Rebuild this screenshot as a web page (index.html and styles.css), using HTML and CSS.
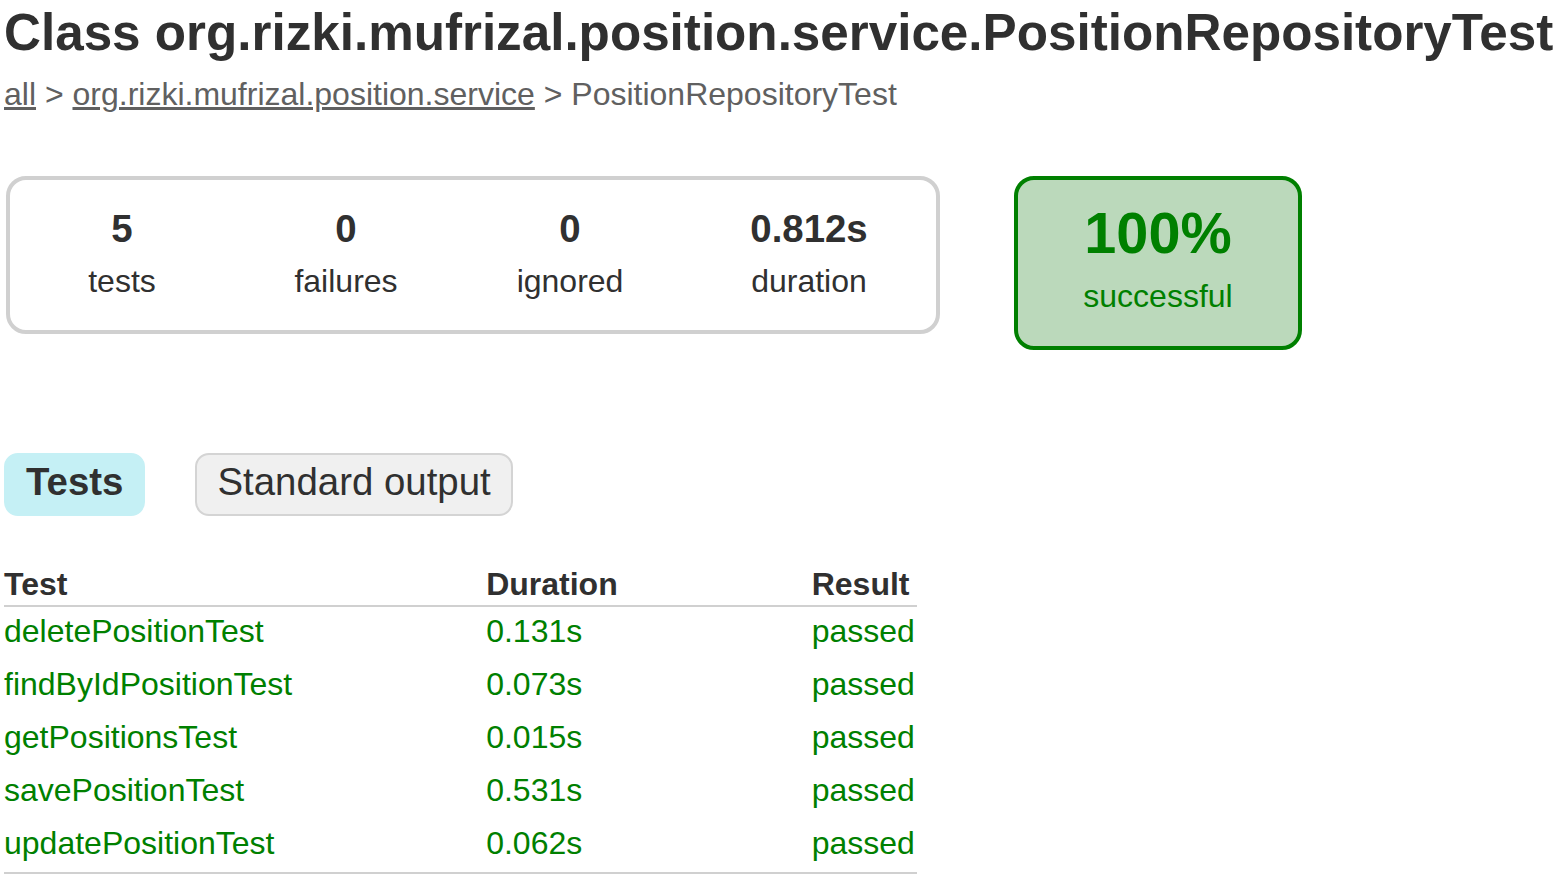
FILE: index.html
```html
<!DOCTYPE html>
<html>
<head>
<meta charset="utf-8">
<title>Test results - Class org.rizki.mufrizal.position.service.PositionRepositoryTest</title>
<link rel="stylesheet" href="styles.css">
</head>
<body>
<div class="content">
  <h1 class="title">Class org.rizki.mufrizal.position.service.PositionRepositoryTest</h1>
  <div class="breadcrumbs"><a href="#">all</a> &gt; <a href="#">org.rizki.mufrizal.position.service</a> &gt; PositionRepositoryTest</div>

  <div class="summary">
    <div class="summary-group">
      <div class="info-box">
        <div class="counter">5</div>
        <p>tests</p>
      </div>
      <div class="info-box">
        <div class="counter">0</div>
        <p>failures</p>
      </div>
      <div class="info-box">
        <div class="counter">0</div>
        <p>ignored</p>
      </div>
      <div class="info-box duration">
        <div class="counter">0.812s</div>
        <p>duration</p>
      </div>
    </div>
    <div class="success-rate">
      <div class="percent">100%</div>
      <p>successful</p>
    </div>
  </div>

  <ul class="tab-links">
    <li class="selected"><a href="#tab0">Tests</a></li>
    <li><a href="#tab1">Standard output</a></li>
  </ul>

  <div class="tab">
    <table class="results">
      <thead>
        <tr><th>Test</th><th>Duration</th><th>Result</th></tr>
      </thead>
      <tbody>
        <tr><td>deletePositionTest</td><td>0.131s</td><td>passed</td></tr>
        <tr><td>findByIdPositionTest</td><td>0.073s</td><td>passed</td></tr>
        <tr><td>getPositionsTest</td><td>0.015s</td><td>passed</td></tr>
        <tr><td>savePositionTest</td><td>0.531s</td><td>passed</td></tr>
        <tr><td>updatePositionTest</td><td>0.062s</td><td>passed</td></tr>
      </tbody>
    </table>
  </div>
</div>
</body>
</html>
```
FILE: styles.css
```css
html, body {
  margin: 0;
  padding: 0;
  background: #ffffff;
}

body {
  font-family: "Liberation Sans", Arial, Helvetica, sans-serif;
  font-size: 32px;
  color: #303030;
}

.content {
  padding: 7px 0 0 4px;
}

.title {
  font-size: 51.2px;
  font-weight: bold;
  line-height: 51px;
  margin: 0 0 20px 0;
  white-space: nowrap;
}

.breadcrumbs {
  line-height: 32px;
  color: #606060;
  white-space: nowrap;
}

.breadcrumbs a {
  color: #606060;
  text-decoration: underline;
}

/* summary */
.summary {
  display: flex;
  align-items: flex-start;
  margin-top: 64px;
  margin-bottom: 81px;
  padding: 2px;
}

.summary-group {
  display: flex;
  border: 4px solid #d0d0d0;
  border-radius: 20px;
}

.info-box {
  width: 220px;
  padding: 29px 2px 33px 2px;
  text-align: center;
}

.info-box.duration {
  width: 250px;
}

.info-box p,
.success-rate p {
  margin: 0;
  line-height: 32px;
}

.counter {
  font-size: 38.4px;
  font-weight: bold;
  line-height: 39px;
  margin-bottom: 17px;
}

.success-rate {
  width: 280px;
  margin-left: 74px;
  padding: 25px 0 34px 0;
  text-align: center;
  color: #008000;
  background-color: #bbd9bb;
  border: 4px solid #008000;
  border-radius: 20px;
}

.percent {
  font-size: 57.6px;
  font-weight: bold;
  line-height: 57px;
  margin-bottom: 18px;
}

/* tabs */
.tab-links {
  display: flex;
  gap: 50px;
  list-style: none;
  margin: 0;
  padding: 20px 0 52px 0;
}

.tab-links li {
  padding: 7px 20px 13px 20px;
  border: 2px solid #d4d4d4;
  border-radius: 14px;
  background-color: #f0f0f0;
}

.tab-links li.selected {
  background-color: #c5f0f5;
  border-color: #c5f0f5;
}

.tab-links li.selected a {
  font-weight: bold;
}

.tab-links a {
  display: block;
  font-size: 38.4px;
  line-height: 39px;
  color: #303030;
  text-decoration: none;
}

/* results table */
.results {
  border-collapse: collapse;
  border-bottom: 2px solid #d0d0d0;
}

.results th {
  text-align: left;
  white-space: nowrap;
  font-weight: bold;
  line-height: 33px;
  padding: 0 2px 4px 192px;
  border-bottom: 2px solid #d0d0d0;
}

.results td {
  white-space: nowrap;
  line-height: 33px;
  padding: 8px 2px 12px 192px;
  color: #008000;
}

.results th:first-child,
.results td:first-child {
  padding-left: 0;
}
```
